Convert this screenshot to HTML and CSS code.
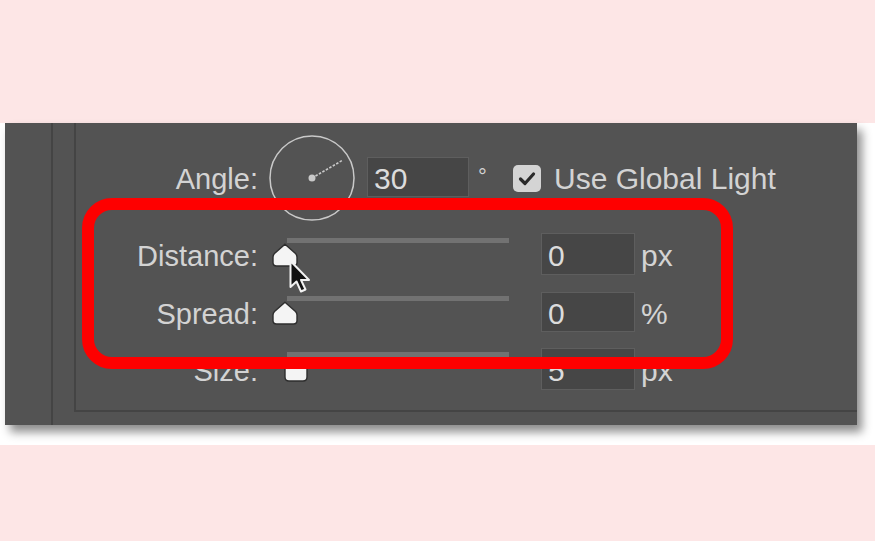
FILE: index.html
```html
<!DOCTYPE html>
<html>
<head>
<meta charset="utf-8">
<link rel="stylesheet" href="styles.css">
</head>
<body>
<div class="top"></div>
<div class="frame">
  <div class="panel">
    <div class="strip"></div>
    <div class="inner">
      <div class="row angle-row">
        <div class="label">Angle:</div>
        <div class="dial">
          <svg width="86" height="86" viewBox="0 0 86 86">
            <circle cx="43" cy="43" r="42" fill="none" stroke="#c9c9c9" stroke-width="1.5"/>
            <circle cx="43" cy="43" r="3.5" fill="#c9c9c9"/>
            <line x1="43" y1="43" x2="74" y2="25" stroke="#c9c9c9" stroke-width="1.6" stroke-dasharray="2.5 1.5"/>
          </svg>
        </div>
        <div class="field wide">30</div>
        <div class="deg">°</div>
        <div class="check">
          <svg width="28" height="27" viewBox="0 0 28 27">
            <path d="M7.5 14 L12 18.5 L20.5 9" fill="none" stroke="#2a2a2a" stroke-width="3.2" stroke-linecap="round" stroke-linejoin="round"/>
          </svg>
        </div>
        <div class="check-label">Use Global Light</div>
      </div>

      <div class="row dist-row">
        <div class="label">Distance:</div>
        <div class="slider">
          <div class="track"></div>
          <svg class="thumb" width="26" height="24" viewBox="0 0 26 24">
            <path d="M13 1.2 L23.5 10.5 Q25 12 25 14 L25 19.5 Q25 23 21.5 23 L4.5 23 Q1 23 1 19.5 L1 14 Q1 12 2.5 10.5 Z" fill="#f4f4f4" stroke="#2e2e2e" stroke-width="1.4"/>
          </svg>
        </div>
        <div class="field">0</div>
        <div class="unit">px</div>
      </div>

      <div class="row spread-row">
        <div class="label">Spread:</div>
        <div class="slider">
          <div class="track"></div>
          <svg class="thumb" width="26" height="24" viewBox="0 0 26 24">
            <path d="M13 1.2 L23.5 10.5 Q25 12 25 14 L25 19.5 Q25 23 21.5 23 L4.5 23 Q1 23 1 19.5 L1 14 Q1 12 2.5 10.5 Z" fill="#f4f4f4" stroke="#2e2e2e" stroke-width="1.4"/>
          </svg>
        </div>
        <div class="field">0</div>
        <div class="unit">%</div>
      </div>

      <div class="row size-row">
        <div class="label">Size:</div>
        <div class="slider">
          <div class="track"></div>
          <svg class="thumb size-thumb" width="24" height="24" viewBox="0 0 24 24">
            <path d="M12 1.2 L21.5 8 Q23 9 23 11 L23 19 Q23 23 19 23 L5 23 Q1 23 1 19 L1 11 Q1 9 2.5 8 Z" fill="#f4f4f4" stroke="#2e2e2e" stroke-width="1.4"/>
          </svg>
        </div>
        <div class="field">5</div>
        <div class="unit">px</div>
      </div>
    </div>

    <div class="highlight"></div>
    <svg class="cursor" width="26" height="36" viewBox="0 0 26 36">
      <path d="M2.5 2 L2.5 28 L8.5 22.5 L13 32.5 L17.5 30.5 L13 21 L21 21 Z" fill="#111" stroke="#f2f2f2" stroke-width="2" stroke-linejoin="round"/>
    </svg>
  </div>
</div>
</body>
</html>
```

FILE: styles.css
```css
html, body {
  margin: 0;
  padding: 0;
}
body {
  background: #fde6e6;
  width: 875px;
  height: 541px;
  overflow: hidden;
  font-family: "Liberation Sans", Arial, sans-serif;
}
.top {
  height: 123px;
}
.frame {
  height: 322px;
  background: #ffffff;
  padding-left: 5px;
  box-sizing: border-box;
}
.panel {
  position: relative;
  width: 852px;
  height: 302px;
  background: #535353;
  display: flex;
  box-shadow: 5px 7px 9px rgba(0, 0, 0, 0.45);
}
.strip {
  width: 46px;
  border-right: 2px solid #444444;
  flex: none;
}
.inner {
  flex: 1;
  margin-left: 21px;
  height: 289px;
  border-left: 2px solid #444444;
  border-bottom: 2px solid #444444;
  box-sizing: border-box;
  padding-top: 34px;
}
.row {
  display: flex;
  align-items: center;
  color: #d3d3d3;
  font-size: 30px;
}
.label {
  width: 182px;
  text-align: right;
  flex: none;
  padding-top: 5px;
  font-size: 29px;
}
.unit, .check-label {
  padding-top: 4px;
}
.angle-row {
  height: 40px;
}
.dial {
  margin-left: 11px;
  width: 86px;
  height: 40px;
  position: relative;
  flex: none;
}
.dial svg {
  display: block;
  margin-top: -22px;
}
.field {
  margin-left: 32px;
  width: 94px;
  height: 42px;
  box-sizing: border-box;
  background: #464646;
  border: 1px solid #5e5e5e;
  color: #dcdcdc;
  padding-left: 6px;
  padding-top: 3px;
  line-height: 37px;
  flex: none;
}
.field.wide {
  margin-left: 12px;
  width: 102px;
  height: 40px;
  line-height: 35px;
}
.deg {
  margin-left: 9px;
  width: 12px;
  font-size: 22px;
  align-self: flex-start;
  margin-top: 7px;
}
.check {
  margin-left: 23px;
  width: 28px;
  height: 27px;
  background: #d4d4d4;
  border-radius: 5px;
  flex: none;
  margin-top: 3px;
}
.check svg {
  display: block;
}
.check-label {
  margin-left: 13px;
  white-space: nowrap;
}
.slider {
  margin-left: 14px;
  width: 237px;
  align-self: stretch;
  display: flex;
  flex-direction: column;
  flex: none;
}
.track {
  margin-left: 15px;
  height: 5px;
  background: #727272;
  flex: none;
}
.thumb {
  display: block;
  flex: none;
}
.dist-row {
  margin-top: 36px;
  height: 42px;
}
.dist-row .slider {
  padding-top: 5px;
}
.spread-row {
  margin-top: 17px;
  height: 40px;
}
.spread-row .slider {
  padding-top: 4px;
}
.spread-row .field {
  height: 40px;
  line-height: 35px;
}
.size-row {
  margin-top: 16px;
  height: 42px;
}
.size-row .slider {
  padding-top: 4px;
}
.size-thumb {
  margin-left: 12px;
  margin-top: 1px;
}
.unit {
  margin-left: 6px;
}
.highlight {
  position: absolute;
  left: 77px;
  top: 75px;
  width: 651px;
  height: 171px;
  box-sizing: border-box;
  border: 12px solid #fe0000;
  border-radius: 30px;
}
.cursor {
  position: absolute;
  left: 283px;
  top: 136px;
}
```
